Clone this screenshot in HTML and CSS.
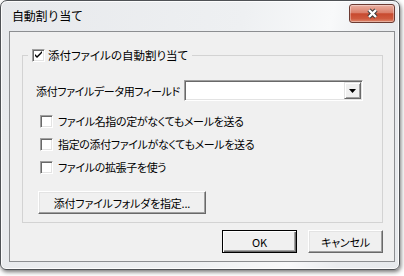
FILE: index.html
```html
<!DOCTYPE html>
<html lang="ja">
<head>
<meta charset="utf-8">
<title>自動割り当て</title>
<link rel="stylesheet" href="styles.css">
</head>
<body>
<div class="window">
  <div class="titlebar">
    <span class="title">自動割り当て</span>
    <button class="close" aria-label="閉じる">
      <svg width="13" height="11" viewBox="0 0 13 11">
        <path d="M3 2 L10 9 M10 2 L3 9" stroke="#3a3a3a" stroke-width="4.4" stroke-linecap="butt" fill="none"/>
        <path d="M3 2 L10 9 M10 2 L3 9" stroke="#ffffff" stroke-width="2.4" stroke-linecap="butt" fill="none"/>
      </svg>
    </button>
  </div>
  <div class="client">
    <fieldset class="group">
      <legend class="legend">
        <span class="legend-inner">
          <span class="cb">
            <svg width="11" height="11" viewBox="0 0 11 11"><path d="M2 4 L2 6 L4 8 L9 3 L9 1 L4 6 Z" fill="#000"/></svg>
          </span>
          <span>添付ファイルの自動割り当て</span>
        </span>
      </legend>
      <div class="gb-body">
        <div class="field-row">
          <span class="label">添付ファイルデータ用フィールド</span>
          <div class="combo">
            <span class="combo-btn">
              <svg width="7" height="4" viewBox="0 0 7 4"><polygon points="0,0 7,0 3.5,4" fill="#000"/></svg>
            </span>
          </div>
        </div>
        <div class="check-row"><span class="cb"></span><span>ファイル名指の定がなくてもメールを送る</span></div>
        <div class="check-row"><span class="cb"></span><span>指定の添付ファイルがなくてもメールを送る</span></div>
        <div class="check-row"><span class="cb"></span><span>ファイルの拡張子を使う</span></div>
        <button class="btn folder-btn">添付ファイルフォルダを指定...</button>
      </div>
    </fieldset>
    <div class="actions">
      <button class="btn default">OK</button>
      <button class="btn">キャンセル</button>
    </div>
  </div>
</div>
</body>
</html>
```
FILE: styles.css
```css
* { box-sizing: border-box; }
html, body { margin: 0; padding: 0; background: #ffffff; }
body {
  width: 404px;
  height: 276px;
  overflow: hidden;
  font-family: "Noto Sans CJK JP", "Noto Sans", sans-serif;
  font-size: 12px;
  color: #000;
}
.window {
  width: 400px;
  height: 270px;
  border: 1px solid #4f5256;
  border-radius: 7px 7px 6px 6px;
  background: linear-gradient(100deg, #e7e9ec 0%, #eef0f2 55%, #f8f9fa 75%, #eaecef 86%, #e6e9ec 100%);
  padding: 0 4px 7px 8px;
  box-shadow: 1px 2px 4px rgba(0,0,0,0.55), inset 0 0 0 1px rgba(255,255,255,0.85);
  display: flex;
  flex-direction: column;
}
.titlebar {
  height: 30px;
  display: flex;
  justify-content: space-between;
  align-items: flex-start;
}
.title {
  margin: 8px 0 0 3px;
  line-height: 14px;
  font-size: 12px;
  letter-spacing: -0.2px;
  color: #000;
}
.close {
  margin: 3px 0 0 0;
  padding: 0;
  width: 46px;
  height: 19px;
  border: 1px solid #6b3b33;
  border-radius: 3px;
  background: linear-gradient(#eab0a2 0%, #db806b 45%, #c74a2f 52%, #cf5a3e 80%, #de8a70 100%);
  box-shadow: inset 0 0 0 1px rgba(255,255,255,0.35);
  display: flex;
  align-items: center;
  justify-content: center;
}
.client {
  width: 386px;
  height: 231px;
  border: 1px solid #8c8e91;
  background: #f0f0f0;
  padding: 17px 11px 0 12px;
  font-size: 11px;
  letter-spacing: -0.35px;
  font-feature-settings: "palt";
  white-space: nowrap;
}
.group {
  margin: 0;
  padding: 0;
  border: 1px solid #d3d3d3;
  height: 174px;
  min-width: 0;
}
.legend {
  margin-left: 5px;
  padding: 0 4px;
  height: 13px;
}
.legend-inner {
  display: flex;
  align-items: center;
  gap: 3px;
  height: 13px;
  line-height: 13px;
  font-size: 11.5px;
  letter-spacing: 0;
}
.cb {
  width: 13px;
  height: 13px;
  flex: none;
  background: #fff;
  border: 1px solid;
  border-color: #a0a0a0 #ffffff #ffffff #a0a0a0;
  box-shadow: inset 1px 1px #696969, inset -1px -1px #e3e3e3;
  display: flex;
  align-items: center;
  justify-content: center;
}
.cb svg { display: block; }
.gb-body {
  padding: 18px 19px 0 13px;
}
.field-row {
  display: flex;
  align-items: center;
  height: 21px;
}
.label { line-height: 14px; flex: none; }
.combo {
  margin-left: auto;
  width: 179px;
  height: 21px;
  flex: none;
  background: #fff;
  border: 1px solid;
  border-color: #a0a0a0 #ffffff #ffffff #a0a0a0;
  box-shadow: inset 1px 1px #696969, inset -1px -1px #e3e3e3;
  padding: 1px;
  display: flex;
  justify-content: flex-end;
  align-items: center;
}
.combo-btn {
  width: 17px;
  height: 17px;
  background: #f0f0f0;
  border: 1px solid;
  border-color: #e3e3e3 #696969 #696969 #e3e3e3;
  box-shadow: inset 1px 1px #ffffff, inset -1px -1px #a0a0a0;
  display: flex;
  align-items: center;
  justify-content: center;
}
.combo-btn svg { display: block; }
.check-row {
  display: flex;
  align-items: center;
  gap: 5px;
  height: 13px;
  line-height: 13px;
  margin: 10px 0 0 4px;
}
.field-row + .check-row { margin-top: 14px; }
.btn {
  font-family: inherit;
  font-size: 11px;
  letter-spacing: -0.2px;
  font-feature-settings: "palt";
  color: #000;
  background: #f0f0f0;
  border: 1px solid;
  border-color: #ffffff #696969 #696969 #ffffff;
  box-shadow: inset -1px -1px #a0a0a0, inset 1px 1px #e3e3e3;
  padding: 0;
  height: 23px;
  line-height: 20px;
}
.folder-btn {
  display: block;
  width: 168px;
  margin: 17px 0 0 2px;
}
.actions {
  display: flex;
  justify-content: flex-end;
  gap: 11px;
  margin-top: 7px;
}
.actions .btn { width: 75px; }
.btn.default {
  border: 1px solid #000;
  box-shadow: inset 1px 1px #ffffff, inset -1px -1px #696969, inset -2px -2px #a0a0a0;
}
```
